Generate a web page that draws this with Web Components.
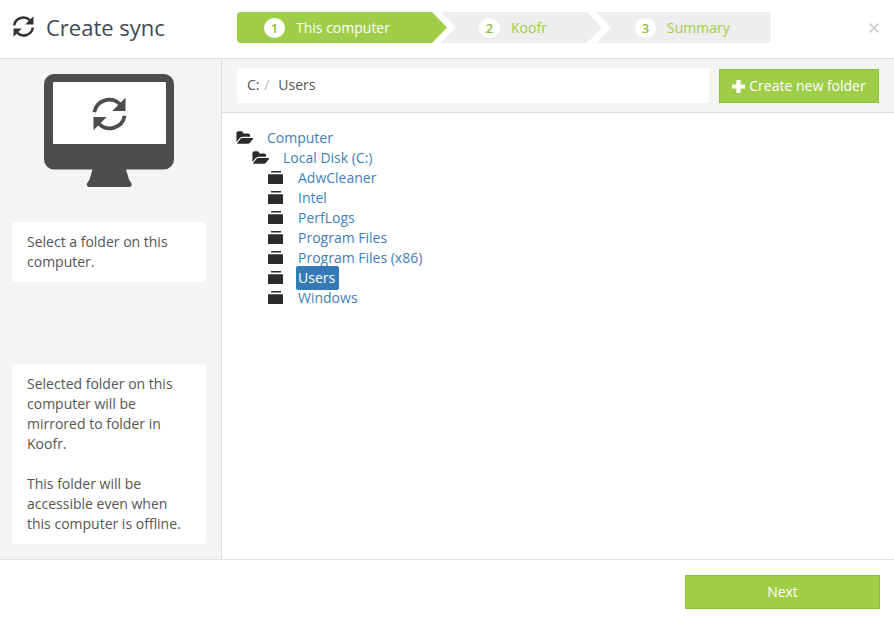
<!DOCTYPE html>
<html>
<head>
<meta charset="utf-8">
<title>Create sync</title>
<style>
    html, body { margin: 0; height: 100%; }
    body { font: 14px/20px "Open Sans", sans-serif; color: #555; background: #fff; overflow: hidden; }
    sync-dialog { height: 623px; }
</style>
</head>
<body>
<sync-dialog>
    <sync-header slot="header">Create sync</sync-header>
    <div slot="side" style="display:contents">
        <side-note style="margin-top:35px">Select a folder on this computer.</side-note>
        <side-note style="margin-top:auto">Selected folder on this computer will be mirrored to folder in Koofr.<br><br>This folder will be accessible even when this computer is offline.</side-note>
    </div>
    <path-bar slot="main"></path-bar>
    <folder-tree slot="main"></folder-tree>
</sync-dialog>

<script>
(function() {
    const FOLDER_OPEN = 'M1879 952q0 31-31 66l-336 396q-43 51-120.5 86.5t-143.5 35.5h-1088q-34 0-60.5-13t-26.5-43q0-31 31-66l336-396q43-51 120.5-86.5t143.5-35.5h1088q34 0 60.5 13t26.5 43zm-343-344v160h-832q-94 0-197 47.5t-164 119.5l-337 396-5 6q0-4-.5-12.5t-.5-12.5v-960q0-92 66-158t158-66h320q92 0 158 66t66 158v32h544q92 0 158 66t66 158z';

    // two thin arcs with big arrow heads, the fa-refresh of the ref is lighter than the stock one
    function refresh(color, stroke) {
        return `<path fill="none" stroke="${color}" stroke-width="${stroke}" d="M2.2 10.8A9.8 9.8 0 0 1 18.8 5.6M21.8 13.2A9.8 9.8 0 0 1 5.2 18.4"/>
            <path fill="${color}" d="M22.4 1.4V10H13.8zM1.6 22.6V14H10.2z"/>`;
    }

    class SyncDialog extends HTMLElement {
        constructor() {
            super();
            this.attachShadow({mode: 'open'});
            this.shadowRoot.innerHTML = `
                <style>
                    :host { display: flex; flex-direction: column; }
                    .header { height: 59px; flex: none; box-sizing: border-box; border-bottom: 1px solid #e2e2e2; }
                    .body { flex: 1; display: flex; min-height: 0; }
                    .side { width: 222px; flex: none; box-sizing: border-box; background: #f4f4f4; border-right: 1px solid #dcdcdc; padding: 15px 15px 15px 12px; display: flex; flex-direction: column; }
                    .main { flex: 1; display: flex; flex-direction: column; min-width: 0; }
                    .footer { height: 64px; flex: none; border-top: 1px solid #e2e2e2; box-sizing: border-box; display: flex; justify-content: flex-end; padding: 15px 14px 0 0; }
                    .monitor { display: block; margin-left: 32px; flex: none; }
                    .next { width: 195px; height: 34px; box-sizing: border-box; background: #9ecd48; border: 1px solid #8fc03c; color: #fff; text-align: center; line-height: 32px; }
                </style>
                <div class="header"><slot name="header"></slot></div>
                <div class="body">
                    <div class="side">
                        <svg class="monitor" width="130" height="113" viewBox="0 0 130 113">
                            <path fill="#4d4d4d" d="M10 0h110a10 10 0 0 1 10 10v75.500a10 10 0 0 1-10 10H82l3 10 2.500 4a2.500 2.500 0 0 1-2.500 3.500H45.500a2.500 2.500 0 0 1-2.500-3.500l2.500-4 3-10H10a10 10 0 0 1-10-10V10A10 10 0 0 1 10 0z"/>
                            <rect x="9" y="8" width="113" height="62" rx="1" fill="#fff"/>
                            <svg x="47" y="21.500" width="37" height="37" viewBox="0 0 24 24">${refresh('#4d4d4d', 2.4)}</svg>
                        </svg>
                        <slot name="side"></slot>
                    </div>
                    <div class="main"><slot name="main"></slot></div>
                </div>
                <div class="footer"><div class="next">Next</div></div>
            `;
        }
    }

    class SyncHeader extends HTMLElement {
        constructor() {
            super();
            this.attachShadow({mode: 'open'});
            this.shadowRoot.innerHTML = `
                <style>
                    :host { display: flex; align-items: center; height: 58px; position: relative; }
                    .title { display: flex; align-items: center; width: 237px; flex: none; font-size: 22px; color: #3f4a55; padding-bottom: 4px; }
                    .title svg { margin: -2px 11px 0 12px; flex: none; }
                    .steps { display: flex; width: 534px; height: 31px; margin-top: -3px; }
                    .close { position: absolute; right: 15px; top: 23px; display: block; }
                </style>
                <div class="title">
                    <svg width="23" height="23" viewBox="0 0 24 24">${refresh('#333', 2.6)}</svg>
                    <span><slot></slot></span>
                </div>
                <div class="steps">
                    <wizard-step n="1" active first>This computer</wizard-step>
                    <wizard-step n="2">Koofr</wizard-step>
                    <wizard-step n="3" last>Summary</wizard-step>
                </div>
                <svg class="close" width="10" height="10" viewBox="0 0 10 10"><path stroke="#cfcfcf" stroke-width="1.800" d="M.6.6l8.800 8.800M9.400.6L.6 9.400"/></svg>
            `;
        }
    }

    class WizardStep extends HTMLElement {
        constructor() {
            super();
            this.attachShadow({mode: 'open'});
            const active = this.hasAttribute('active');
            const first = this.hasAttribute('first');
            const last = this.hasAttribute('last');
            const width = first ? 210 : last ? 175 : 161;
            const fill = active ? '#9ecd48' : '#eeeeee';
            const h = 31, tip = 15;
            let d;
            if (first) d = `M4 0H${width-tip}L${width} ${h/2}L${width-tip} ${h}H4A4 4 0 0 1 0 ${h-4}V4A4 4 0 0 1 4 0z`;
            else if (last) d = `M0 0H${width-4}A4 4 0 0 1 ${width} 4V${h-4}A4 4 0 0 1 ${width-4} ${h}H0L${tip} ${h/2}z`;
            else d = `M0 0H${width-tip}L${width} ${h/2}L${width-tip} ${h}H0L${tip} ${h/2}z`;
            this.shadowRoot.innerHTML = `
                <style>
                    :host { display: block; position: relative; width: ${width}px; height: ${h}px; margin-right: -6px; flex: none; color: ${active ? '#fff' : '#9ecd48'}; }
                    svg { position: absolute; left: 0; top: 0; }
                    .label { position: relative; display: flex; align-items: center; height: ${h}px; padding-left: ${first ? 27 : last ? 39 : 38}px; }
                    .num { width: 21px; height: 20px; line-height: 20px; border-radius: 50%; background: #fff; color: #8fbd3e; text-align: center; font-size: 13px; font-weight: 600; margin-right: 11px; }
                </style>
                <svg width="${width}" height="${h}"><path fill="${fill}" d="${d}"/></svg>
                <div class="label"><span class="num">${this.getAttribute('n')}</span><slot></slot></div>
            `;
        }
    }

    class SideNote extends HTMLElement {
        constructor() {
            super();
            this.attachShadow({mode: 'open'});
            this.shadowRoot.innerHTML = `
                <style>
                    :host { display: block; background: #fff; border-radius: 4px; padding: 10px 15px; }
                </style>
                <slot></slot>
            `;
        }
    }

    class PathBar extends HTMLElement {
        constructor() {
            super();
            this.attachShadow({mode: 'open'});
            this.shadowRoot.innerHTML = `
                <style>
                    :host { display: flex; flex: none; background: #f4f4f4; border-bottom: 1px solid #dcdcdc; padding: 9px 15px; height: 35px; gap: 10px; align-items: flex-start; }
                    .crumbs { flex: 1; height: 35px; background: #fff; padding-left: 10px; line-height: 34px; box-sizing: border-box; }
                    .sep { color: #bbb; margin: 0 9px 0 1px; }
                    .btn { width: 160px; height: 34px; margin-top: 1px; box-sizing: border-box; background: #9ecd48; border: 1px solid #8fc03c; color: #fff; display: flex; align-items: center; justify-content: center; gap: 4px; }
                    .btn svg { flex: none; }
                </style>
                <div class="crumbs">C: <span class="sep">/</span>Users</div>
                <div class="btn"><svg width="13" height="13" viewBox="0 0 13 13"><path fill="#fff" d="M4.400 0h4.200v4.400H13v4.200H8.600V13H4.400V8.600H0V4.400h4.400z"/></svg>Create new folder</div>
            `;
        }
    }

    class FolderTree extends HTMLElement {
        constructor() {
            super();
            this.attachShadow({mode: 'open'});
            const items = [
                ['Computer', 0, true], ['Local Disk (C:)', 1, true], ['AdwCleaner', 2], ['Intel', 2], ['PerfLogs', 2],
                ['Program Files', 2], ['Program Files (x86)', 2], ['Users', 2, false, true], ['Windows', 2]
            ];
            const rows = items.map(([name, depth, open, selected]) => `
                <div class="row" style="padding-left:${depth * 16}px">
                    ${open
                        ? `<svg class="ico open" width="18" height="16" viewBox="0 0 1920 1792"><path fill="#2b2b2b" d="${FOLDER_OPEN}"/></svg>`
                        : `<svg class="ico closed" width="18" height="16" viewBox="0 0 18 16"><path fill="#2b2b2b" d="M3 1h10v1.400H3zM0.500 4.300h14a.5.5 0 0 1 .5.5V14H0V4.800a.5.5 0 0 1 .5-.5z"/></svg>`}
                    <span class="name${selected ? ' sel' : ''}">${name}</span>
                </div>`).join('');
            this.shadowRoot.innerHTML = `
                <style>
                    :host { display: block; padding: 15px 0 0 15px; color: #3f7fba; }
                    .row { display: flex; align-items: center; height: 20px; }
                    .ico { flex: none; margin-right: 10px; }
                    .open { margin-left: -1px; margin-right: 11px; }
                    .closed { margin-left: -1px; margin-right: 10px; }
                    .name { padding: 0 2px; line-height: 20px; }
                    .sel { background: #337ab7; color: #fff; height: 24px; line-height: 24px; border-radius: 2px; padding: 0 4px 0 2px; position: relative; }
                </style>
                ${rows}
            `;
        }
    }

    window.customElements.define('wizard-step', WizardStep);
    window.customElements.define('sync-header', SyncHeader);
    window.customElements.define('side-note', SideNote);
    window.customElements.define('path-bar', PathBar);
    window.customElements.define('folder-tree', FolderTree);
    window.customElements.define('sync-dialog', SyncDialog);
})();
</script>
</body>
</html>
